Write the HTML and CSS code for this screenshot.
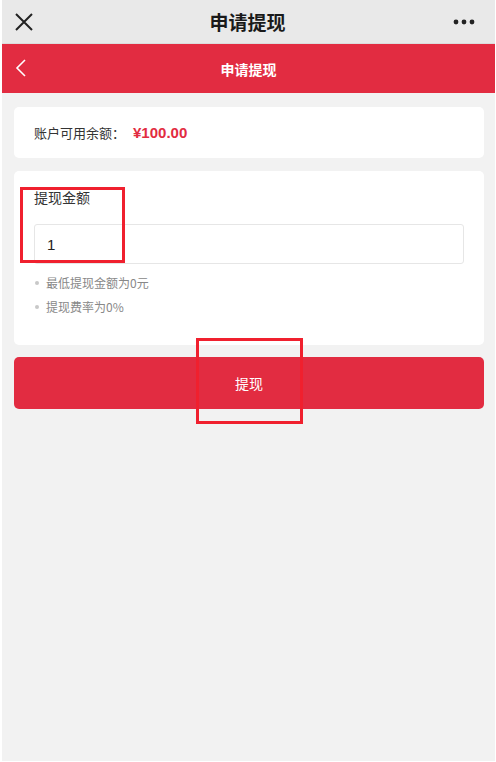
FILE: index.html
```html
<!DOCTYPE html>
<html lang="zh">
<head>
<meta charset="utf-8">
<title>申请提现</title>
<link rel="stylesheet" href="styles.css">
</head>
<body>
<div class="frame">
  <header class="wx-bar">
    <svg class="wx-close" width="20" height="20" viewBox="0 0 20 20"><path d="M2 2 L18 18 M18 2 L2 18" stroke="#222" stroke-width="2" fill="none"/></svg>
    <div class="wx-title">申请提现</div>
    <svg class="wx-more" width="22" height="6" viewBox="0 0 22 6"><circle cx="3" cy="3" r="2.4" fill="#222"/><circle cx="11" cy="3" r="2.4" fill="#222"/><circle cx="19" cy="3" r="2.4" fill="#222"/></svg>
  </header>
  <nav class="app-bar">
    <svg class="back" width="12" height="18" viewBox="0 0 12 18"><path d="M10 1 L2 9 L10 17" stroke="#fff" stroke-width="1.6" fill="none"/></svg>
    <div class="app-title">申请提现</div>
  </nav>
  <main class="content">
    <section class="card balance">
      <span class="bal-label">账户可用余额：</span><span class="bal-value">¥100.00</span>
    </section>
    <section class="card form">
      <div class="field-label">提现金额</div>
      <div class="input">1</div>
      <ul class="tips">
        <li>最低提现金额为0元</li>
        <li>提现费率为0%</li>
      </ul>
    </section>
    <button class="submit">提现</button>
  </main>
  <div class="mark mark-1"></div>
  <div class="mark mark-2"></div>
</div>
</body>
</html>
```
FILE: styles.css
```css
html, body {
  margin: 0;
  padding: 0;
  background: #ffffff;
}
body {
  font-family: "Noto Sans CJK SC", "Noto Sans", "Liberation Sans", sans-serif;
  color: #333;
}
.frame {
  position: relative;
  margin-left: 2px;
  width: 493px;
  height: 761px;
  background: #f2f2f2;
  overflow: hidden;
}
.wx-bar {
  height: 44px;
  background: #e9e9e9;
  display: flex;
  align-items: center;
  justify-content: space-between;
  padding: 0 20px 0 12px;
  border-bottom: 1px solid #dcdcdc;
  box-sizing: border-box;
}
.wx-title {
  font-size: 19px;
  font-weight: 700;
  color: #1a1a1a;
  padding-left: 8px;
}
.app-bar {
  height: 49px;
  background: #e22c41;
  display: flex;
  align-items: center;
  justify-content: center;
  position: relative;
}
.back {
  position: absolute;
  left: 13px;
  top: 15px;
}
.app-title {
  color: #fff;
  font-size: 14px;
  font-weight: 700;
}
.content {
  padding: 14px 11px 0 12px;
  display: flex;
  flex-direction: column;
  gap: 13px;
}
.card {
  background: #fff;
  border-radius: 5px;
}
.balance {
  height: 51px;
  display: flex;
  align-items: center;
  padding-left: 20px;
  font-size: 13px;
}
.bal-label { color: #333; }
.bal-value {
  color: #e22c41;
  font-weight: 700;
  font-family: "Liberation Sans", "Noto Sans CJK SC", sans-serif;
  font-size: 15px;
  margin-left: 8px;
}
.form {
  padding: 17px 20px 0 20px;
  height: 174px;
  box-sizing: border-box;
}
.field-label {
  font-size: 14px;
  line-height: 18px;
  color: #333;
}
.input {
  margin-top: 18px;
  height: 40px;
  border: 1px solid #e6e6e6;
  border-radius: 3px;
  box-sizing: border-box;
  padding-left: 12px;
  display: flex;
  align-items: center;
  font-family: "Liberation Sans", sans-serif;
  font-size: 15px;
  color: #222;
}
.tips {
  list-style: none;
  margin: 7px 0 0 0;
  padding: 0;
}
.tips li {
  position: relative;
  padding-left: 12px;
  font-size: 12px;
  line-height: 24px;
  color: #888;
}
.tips li::before {
  content: "";
  position: absolute;
  left: 1px;
  top: 10px;
  width: 4px;
  height: 4px;
  border-radius: 50%;
  background: #c8c8c8;
}
.submit {
  height: 52px;
  border: none;
  border-radius: 5px;
  background: #e22c41;
  color: #fff;
  font-family: "Noto Sans CJK SC", sans-serif;
  font-size: 14px;
  margin-top: -1px;
}
.mark {
  position: absolute;
  border: 3px solid #f0202e;
  box-sizing: border-box;
}
.mark-1 {
  left: 18px;
  top: 187px;
  width: 105px;
  height: 76px;
}
.mark-2 {
  left: 194px;
  top: 338px;
  width: 107px;
  height: 86px;
}
```
